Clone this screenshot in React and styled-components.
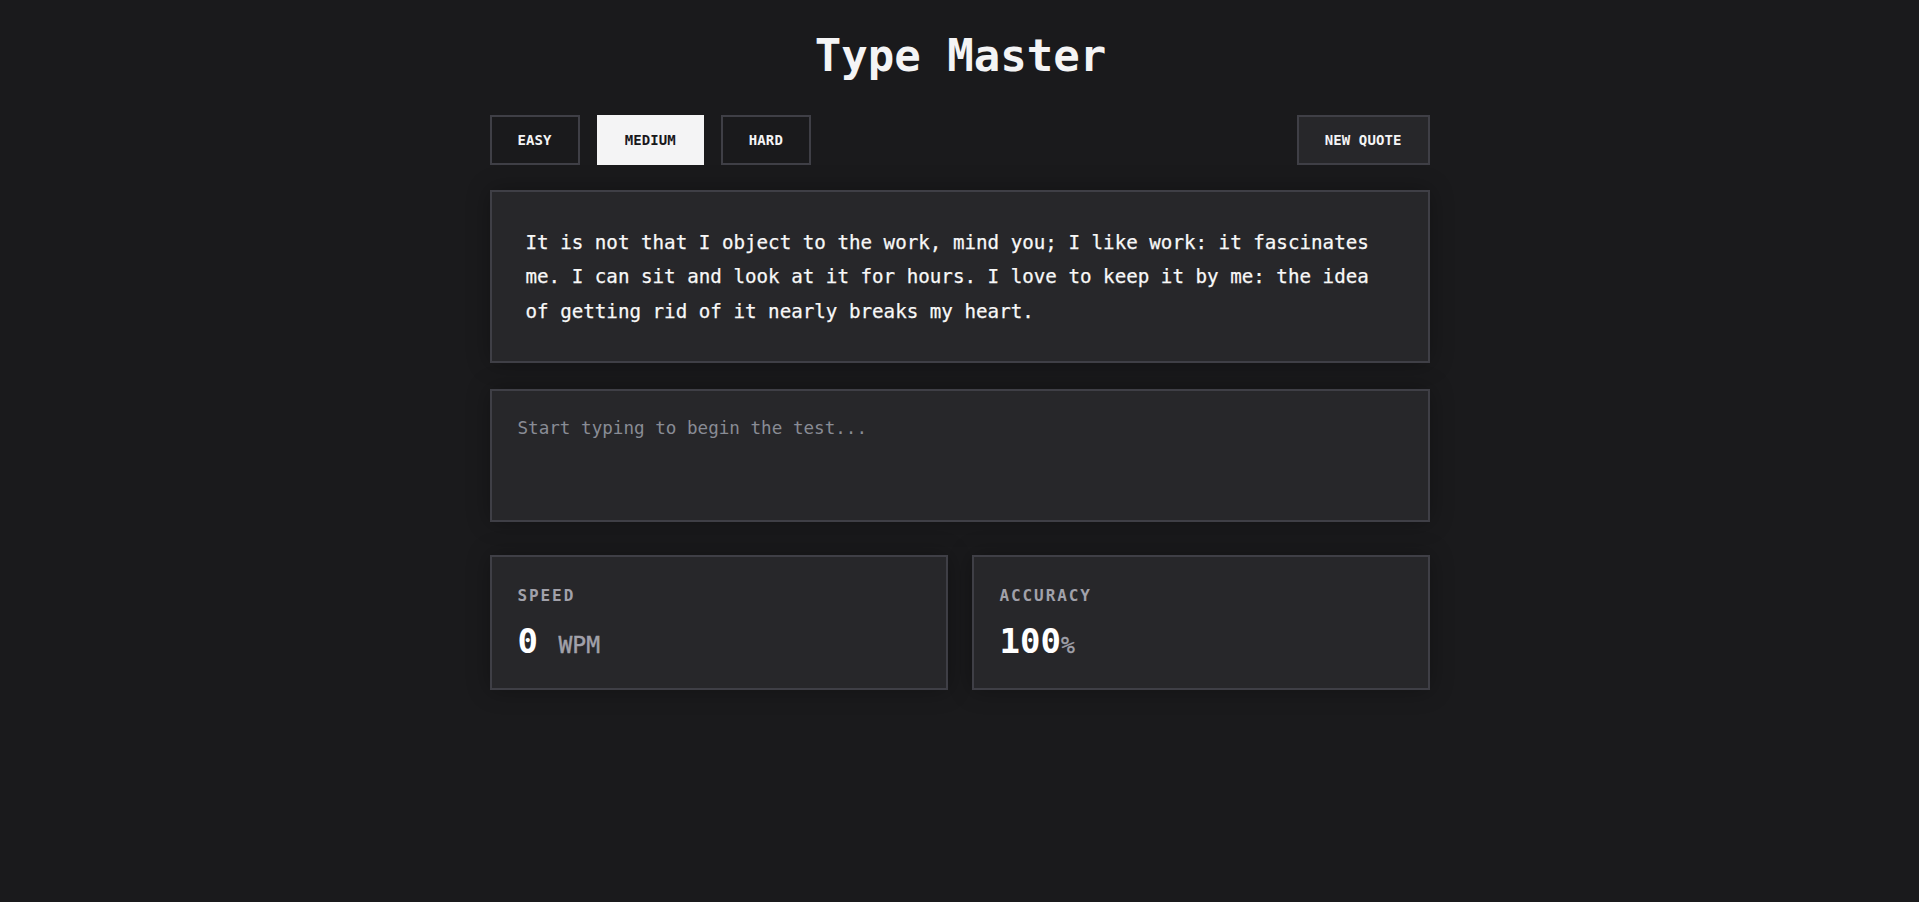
import React, { useState } from "react";
import styled, { createGlobalStyle } from "styled-components";

const GlobalStyle = createGlobalStyle`
  html, body {
    margin: 0;
    padding: 0;
    background: #1a1a1c;
  }
  body {
    font-family: "DejaVu Sans Mono", "Liberation Mono", monospace;
    color: #f4f4f5;
  }
`;

const Page = styled.main`
  min-height: 902px;
  box-sizing: border-box;
  padding-top: 30px;
  display: flex;
  flex-direction: column;
  align-items: center;
`;

const Title = styled.h1`
  margin: 0 0 32px 2px;
  font-size: 44px;
  line-height: 52.8px;
  font-weight: 700;
  color: #f4f4f5;
  text-align: center;
`;

const Container = styled.div`
  width: 940px;
  display: flex;
  flex-direction: column;
`;

const Toolbar = styled.div`
  display: flex;
  align-items: center;
  justify-content: space-between;
  margin-bottom: 25px;
`;

const Group = styled.div`
  display: flex;
  gap: 17px;
`;

const Button = styled.button`
  height: 50px;
  box-sizing: border-box;
  padding: 0 26px;
  border: 2px solid ${(p) => (p.$active ? "#f4f4f5" : "#3f3f46")};
  background: ${(p) => (p.$active ? "#f4f4f5" : p.$filled ? "#27272a" : "transparent")};
  color: ${(p) => (p.$active ? "#18181b" : "#f4f4f5")};
  font-family: "DejaVu Sans Mono", monospace;
  font-size: 14px;
  letter-spacing: 0.1px;
  font-weight: 700;
  text-transform: uppercase;
  cursor: pointer;
`;

const Card = styled.div`
  background: #27272a;
  border: 2px solid #3f3f46;
  box-shadow: 0 0 22px rgba(0, 0, 0, 0.3);
`;

const QuoteCard = styled(Card)`
  padding: 34px 30px 32px 34px;
  margin-bottom: 26px;
`;

const QuoteText = styled.p`
  margin: 0;
  font-size: 19.2px;
  line-height: 34.5px;
  color: #f8f8f8;
  -webkit-text-stroke: 0.25px #f8f8f8;
`;

const Input = styled.textarea`
  display: block;
  width: 100%;
  height: 133px;
  box-sizing: border-box;
  padding: 24px 24px 24px 26px;
  margin: 0 0 33px;
  background: #27272a;
  border: 2px solid #3f3f46;
  box-shadow: 0 0 22px rgba(0, 0, 0, 0.3);
  color: #f4f4f5;
  font-family: "DejaVu Sans Mono", monospace;
  font-size: 17.6px;
  line-height: 26.4px;
  resize: none;
  outline: none;
  overflow: hidden;
  &::placeholder {
    color: #898c95;
  }
`;

const Stats = styled.div`
  display: grid;
  grid-template-columns: 1fr 1fr;
  gap: 24px;
`;

const StatCard = styled(Card)`
  padding: 29px 24px 23px 26px;
  display: flex;
  flex-direction: column;
  gap: 15px;
`;

const StatLabel = styled.div`
  font-size: 16px;
  line-height: 20px;
  font-weight: 700;
  letter-spacing: 1.9px;
  color: #a1a1aa;
  text-transform: uppercase;
`;

const StatValue = styled.div`
  font-size: 34px;
  line-height: 40px;
  font-weight: 700;
  color: #ffffff;
`;

const Unit = styled.span`
  font-size: 23px;
  font-weight: 400;
  color: #a1a1aa;
  -webkit-text-stroke: 0.4px #a1a1aa;
`;

const QUOTE =
  "It is not that I object to the work, mind you; I like work: it fascinates me. I can sit and look at it for hours. I love to keep it by me: the idea of getting rid of it nearly breaks my heart.";

export default function App() {
  const [level, setLevel] = useState("medium");
  const [typed, setTyped] = useState("");
  const levels = ["easy", "medium", "hard"];

  return (
    <>
      <GlobalStyle />
      <Page>
        <Title>Type Master</Title>
        <Container>
          <Toolbar>
            <Group>
              {levels.map((l) => (
                <Button key={l} $active={level === l} onClick={() => setLevel(l)}>
                  {l}
                </Button>
              ))}
            </Group>
            <Button $filled>New Quote</Button>
          </Toolbar>
          <QuoteCard>
            <QuoteText>{QUOTE}</QuoteText>
          </QuoteCard>
          <Input
            placeholder="Start typing to begin the test..."
            value={typed}
            onChange={(e) => setTyped(e.target.value)}
          />
          <Stats>
            <StatCard>
              <StatLabel>Speed</StatLabel>
              <StatValue>
                0 <Unit>WPM</Unit>
              </StatValue>
            </StatCard>
            <StatCard>
              <StatLabel>Accuracy</StatLabel>
              <StatValue>
                100<Unit>%</Unit>
              </StatValue>
            </StatCard>
          </Stats>
        </Container>
      </Page>
    </>
  );
}
